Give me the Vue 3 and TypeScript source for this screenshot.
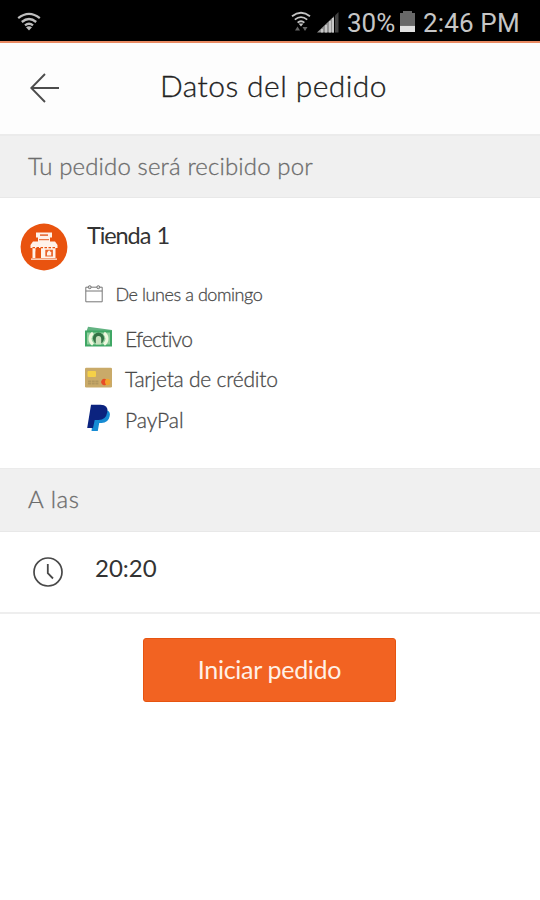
<script setup lang="ts">
interface Payment {
  id: 'cash' | 'card' | 'paypal'
  label: string
}

const battery = '30%'
const clock = '2:46 PM'
const title = 'Datos del pedido'
const store = 'Tienda 1'
const schedule = 'De lunes a domingo'
const time = '20:20'
const payments: Payment[] = [
  { id: 'cash', label: 'Efectivo' },
  { id: 'card', label: 'Tarjeta de crédito' },
  { id: 'paypal', label: 'PayPal' },
]
</script>

<template>
  <div class="screen">
    <div class="status">
      <svg class="wifi" width="24" height="20" viewBox="0 0 24 20" fill="none" stroke="#bdbdbd" stroke-width="2.3">
        <path d="M1.2 6.2Q12 -2.4 22.8 6.2M4.8 10Q12 4 19.2 10M8 13.4Q12 10 16 13.4" />
        <path d="M9 15.2Q12 13.4 15 15.2L12 18.6Z" fill="#bdbdbd" stroke="none" />
      </svg>
      <svg class="wifi-data" width="20" height="22" viewBox="0 0 20 22" fill="none" stroke="#c4c4c4" stroke-width="1.8">
        <path d="M1 5.2Q10 -1.8 19 5.2M3.8 8.6Q10 3.6 16.2 8.6M6.6 11.6Q10 8.8 13.4 11.6" />
        <path d="M7.5 12.5h5L10 15.4Z" fill="#c4c4c4" stroke="none" />
        <path d="M4 19.5l2.5-4 2.5 4zM11.5 16h5L14 20z" fill="#666" stroke="none" />
      </svg>
      <svg class="signal" width="22" height="21" viewBox="0 0 22 21">
        <path d="M0 20.5L17 4.3V20.5Z" fill="#929292" />
        <path d="M18 3.5L21.5 0V20.5H18Z" fill="#424242" />
        <path d="M5 17v3.5M9 13v7.5M13 9v11.5M16 6v14.5" stroke="#d0d0d0" stroke-width="1.7" />
      </svg>
      <span class="percent">{{ battery }}</span>
      <svg class="battery" width="15" height="22" viewBox="0 0 15 22">
        <path d="M0 2h3V0h9v2h3v12H0z" fill="#686868" />
        <path d="M0 14.5h15V21H0z" fill="#e0e0e0" />
      </svg>
      <span class="clock">{{ clock }}</span>
    </div>

    <header class="header">
      <svg class="back" width="30" height="30" viewBox="0 0 30 30" fill="none" stroke="#4c4c4c" stroke-width="1.9">
        <path d="M15 1L1.3 15L15 29M1.3 15H29" />
      </svg>
      <h1 class="title">{{ title }}</h1>
    </header>

    <h2 class="band band-store">Tu pedido será recibido por</h2>

    <section class="store">
      <svg class="store-logo" width="48" height="48" viewBox="0 0 48 48">
        <circle cx="24" cy="24" r="23.4" fill="#e9530f" />
        <g fill="#fff2e9">
          <path d="M16 9.5h16v5H16zM18 14h12v5H18z" />
          <path d="M13 18.5h22l2.5 3.5v3h-27v-3z" />
          <path d="M12.5 25h3v10h-3zM21 25h3v10h-3zM24 25h11.5v10H24zM11 35.4h26v1.4H11z" />
        </g>
        <path d="M20 11.2h8v1.8h-8zM19 16h10v1.2H19z" fill="#e97745" />
        <path d="M12.5 24.6h23" stroke="#e9530f" stroke-width="1.3" stroke-dasharray="2.5 1.5" />
        <path d="M15.7 35V28.5q2.6-3 5 0V35z" fill="#e9530f" />
        <path d="M25.3 26.8h7.6v6.6h-7.6z" fill="#e9632a" />
        <path d="M27 32.4v-3l2.1-2.2 2.1 2.2v3z" fill="#fff2e9" />
      </svg>
      <div class="store-info">
        <h3 class="store-name">{{ store }}</h3>
        <div class="schedule">
          <svg width="18" height="18" viewBox="0 0 18 18" fill="none" stroke="#777" stroke-width="1">
            <path d="M.8 2.2H17.2V16.8H.8zM.8 6H17.2" />
            <circle cx="4.7" cy="2.2" r="1.5" fill="#ddd" />
            <circle cx="13.3" cy="2.2" r="1.5" fill="#ddd" />
          </svg>
          <span>{{ schedule }}</span>
        </div>
        <ul class="payments">
          <li v-for="p in payments" :key="p.id" class="payment">
            <svg v-if="p.id === 'cash'" width="28" height="22" viewBox="0 0 28 22">
              <path d="M3 .8L27 4V9L1 7z" fill="#63b382" />
              <path d="M0 4.5H27V20.5H0z" fill="#3fa765" />
              <path d="M2 6.5H25V18.5H2z" fill="#8fcf9c" />
              <path d="M8 7C4 10 4 15.5 8 18.5M19 7C23 10 23 15.5 19 18.5" fill="none" stroke="#f0f7df" stroke-width="3" />
              <circle cx="13.5" cy="12.2" r="5.6" fill="#347345" />
              <path d="M10.8 18.5V13Q10.8 10 13.5 10T16.2 13v5.5z" fill="#c8dfbd" />
            </svg>
            <svg v-else-if="p.id === 'card'" width="28" height="22" viewBox="0 0 28 22">
              <rect x="0" y=".7" width="27" height="19.8" rx="1.3" fill="#c9aa69" />
              <rect x="2.5" y="4" width="8.5" height="6" rx="1" fill="#f5d148" />
              <path d="M3 14.3h11M3 16.6h11" stroke="#b2975e" stroke-width="1.8" stroke-dasharray="3 .7" />
              <circle cx="22.2" cy="15" r="3.2" fill="#f2a52c" />
              <path d="M21 12.3a3.2 3.2 0 1 0 0 5.4a4.5 4.5 0 0 1 0-5.4z" fill="#e74c27" />
            </svg>
            <svg v-else width="28" height="28" viewBox="0 0 28 28">
              <path d="M9 6h12.5Q26 7.5 24.6 12.5Q23.2 19 16.5 19H14.2L12.8 27H6.5z" fill="#168bd3" />
              <path d="M6 .8H15.5Q23.6 1 22.3 8Q21 16 13.5 16H9.7L8 24H2.2z" fill="#0b237f" />
            </svg>
            <span :class="['pay-label', p.id]">{{ p.label }}</span>
          </li>
        </ul>
      </div>
    </section>

    <h2 class="band band-time">A las</h2>

    <section class="time-row">
      <svg width="30" height="30" viewBox="0 0 30 30" fill="none" stroke="#484848" stroke-width="1.7">
        <circle cx="15" cy="15" r="14" />
        <path d="M14.8 7V16.2L20 21.5" stroke-width="1.8" />
      </svg>
      <span class="time">{{ time }}</span>
    </section>

    <button class="start" type="button">Iniciar pedido</button>
  </div>
</template>

<style>
body {
  margin: 0;
  background: #fff;
}
</style>

<style scoped>
* {
  box-sizing: border-box;
}

.screen {
  width: 540px;
  height: 900px;
  display: flex;
  flex-direction: column;
  overflow: hidden;
  background: #fff;
  color: #4a4a4a;
  font-family: Lato, "Liberation Sans", sans-serif;
  font-variant-ligatures: none;
}

svg {
  display: block;
  flex: none;
}

h1,
h2,
h3,
ul {
  margin: 0;
  padding: 0;
  list-style: none;
}

span,
h1,
h2,
h3,
button {
  white-space: nowrap;
}

.status {
  height: 43px;
  flex: none;
  display: flex;
  align-items: flex-start;
  padding: 11px 0 0 17px;
  background: #000;
  border-bottom: 2px solid #e98a62;
  color: #c6c6c6;
  font-family: Roboto, sans-serif;
  font-size: 26px;
  line-height: 24px;
}

.wifi {
  margin-top: 1px;
}

.wifi-data {
  margin-left: 250px;
}

.signal {
  margin: 1px 0 0 6px;
}

.percent {
  width: 49px;
  margin-left: 8px;
}

.battery {
  margin-left: 4px;
}

.clock {
  margin-left: 8px;
  letter-spacing: 0.15px;
}

.header {
  height: 91px;
  flex: none;
  display: flex;
  align-items: center;
  padding: 0 0 2px 30px;
  background: #fdfdfd;
}

.title {
  margin: -5px 0 0 100px;
  font-size: 30px;
  line-height: 36px;
  font-weight: 300;
  letter-spacing: 0.42px;
  color: #222;
  -webkit-text-stroke: 0.3px #222;
}

.band {
  height: 64px;
  flex: none;
  padding: 0 0 0 28px;
  background: #f0f0f0;
  border-top: 2px solid #ebebeb;
  border-bottom: 1px solid #e8e8e8;
  font-size: 24px;
  line-height: 60px;
  font-weight: 300;
  letter-spacing: 0.14px;
  color: #6c6c6c;
  -webkit-text-stroke: 0.3px #6c6c6c;
}

.store {
  height: 270px;
  flex: none;
  display: flex;
  padding: 25px 0 0 20px;
}

.store-info {
  margin-left: 17px;
}

.store-name {
  height: 28px;
  margin-left: 2px;
  font-size: 23.5px;
  line-height: 24px;
  font-weight: 400;
  letter-spacing: -1.1px;
  word-spacing: 1.5px;
  color: #333;
}

.schedule {
  height: 24px;
  display: flex;
  align-items: center;
  gap: 12.5px;
  margin-top: 31px;
  font-size: 18px;
  font-weight: 300;
  letter-spacing: -0.43px;
  color: #4c4c4c;
  -webkit-text-stroke: 0.3px #4c4c4c;
}

.payments {
  margin-top: 11px;
}

.payment {
  height: 40.5px;
  display: flex;
  align-items: center;
  gap: 12px;
  font-size: 21px;
  font-weight: 300;
}

.pay-label {
  padding-top: 2px;
  -webkit-text-stroke: 0.3px #4a4a4a;
}

.cash {
  letter-spacing: -0.75px;
}

.card {
  letter-spacing: -0.24px;
}

.band-time {
  border-top-width: 1px;
  line-height: 59px;
  letter-spacing: 0.6px;
}

.time-row {
  height: 82px;
  flex: none;
  display: flex;
  align-items: center;
  padding-left: 33px;
  border-bottom: 2px solid #eee;
}

.time {
  margin: -9px 0 0 32px;
  font-size: 24px;
  color: #333;
}

.start {
  width: 253px;
  height: 64px;
  margin: 24px 0 0 143px;
  padding: 0 0 3px;
  border: 1px solid #e65410;
  border-radius: 3px;
  background: #f26322;
  color: #fff0e6;
  font-family: inherit;
  font-size: 25px;
  letter-spacing: -0.3px;
}
</style>
